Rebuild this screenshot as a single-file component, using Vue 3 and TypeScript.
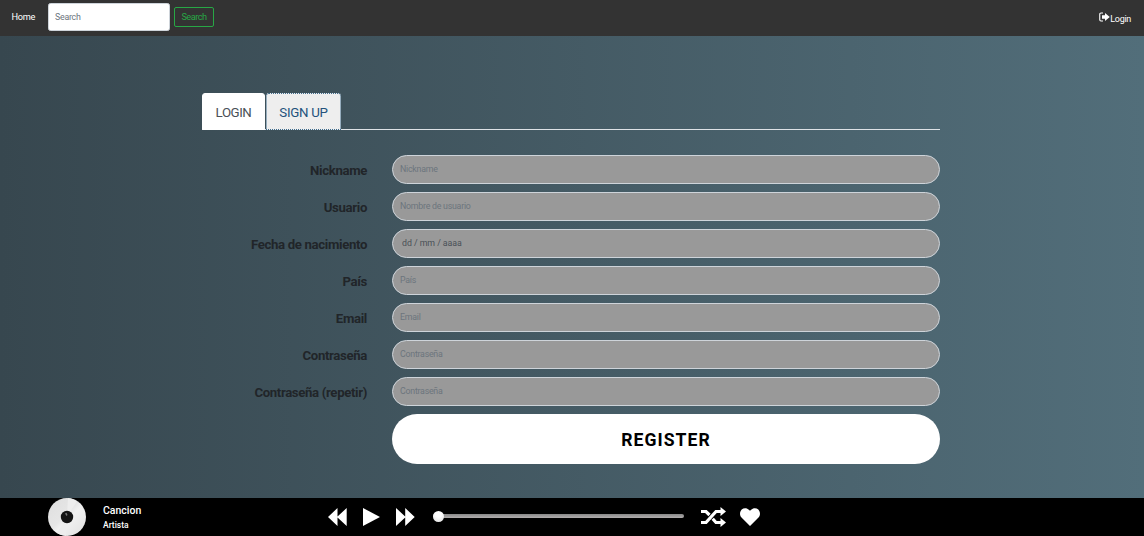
<script setup lang="ts">
interface Field {
  label: string
  hint: string
  date?: boolean
}

const fields: Field[] = [
  { label: 'Nickname', hint: 'Nickname' },
  { label: 'Usuario', hint: 'Nombre de usuario' },
  { label: 'Fecha de nacimiento', hint: 'dd / mm / aaaa', date: true },
  { label: 'País', hint: 'País' },
  { label: 'Email', hint: 'Email' },
  { label: 'Contraseña', hint: 'Contraseña' },
  { label: 'Contraseña (repetir)', hint: 'Contraseña' },
]
</script>

<template>
  <div class="page">
    <header class="navbar">
      <a class="home">Home</a>
      <input class="search" type="text" placeholder="Search" />
      <button class="search-btn">Search</button>
      <a class="login-link">
        <svg width="11" height="10" viewBox="0 0 22 20">
          <path d="M8 2H4Q1.500 2 1.500 4.500V15.500Q1.500 18 4 18H8" fill="none" stroke="#fff" stroke-width="2.200" />
          <path d="M6 6.500H12V1.800L21.500 10L12 18.200V13.500H6Z" fill="#fff" />
        </svg>
        <span>Login</span>
      </a>
    </header>

    <main class="content">
      <nav class="tabs">
        <a class="tab active">LOGIN</a>
        <a class="tab focused">SIGN UP</a>
      </nav>
      <form class="form" @submit.prevent>
        <div v-for="(field, i) in fields" :key="i" class="row">
          <label class="label">{{ field.label }}</label>
          <input class="field" :class="{ date: field.date }" type="text" :placeholder="field.hint" />
        </div>
        <button class="register">REGISTER</button>
      </form>
    </main>

    <footer class="player">
      <svg class="disc" width="38" height="38" viewBox="0 0 38 38">
        <defs>
          <linearGradient id="disc-sheen" x1="0" y1="0" x2="1" y2="1">
            <stop offset="0" stop-color="#dedede" />
            <stop offset="0.450" stop-color="#e6e6e6" />
            <stop offset="0.550" stop-color="#f1f1f1" />
            <stop offset="1" stop-color="#e0e0e0" />
          </linearGradient>
        </defs>
        <circle cx="19" cy="19" r="19" fill="url(#disc-sheen)" />
        <path d="M19 19L20 0A19 19 0 0 1 29 3ZM19 19L18 38A19 19 0 0 1 9 35Z" fill="#ededed" />
        <circle cx="19" cy="19" r="6.200" fill="#141414" />
        <path d="M17 15.500L18.500 14.800L19.500 17L18.500 18Z" fill="#777" />
      </svg>
      <div class="track">
        <div class="title">Cancion</div>
        <div class="artist">Artista</div>
      </div>
      <div class="controls">
        <svg width="19" height="18" viewBox="0 0 19 18"><path d="M0 9L9.500 0V8.500L18.700 0V18L9.500 9.500V18Z" fill="#fff" /></svg>
        <svg class="play" width="17" height="18" viewBox="0 0 17 18"><path d="M0 0L17 9L0 18Z" fill="#fff" /></svg>
        <svg class="next" width="19" height="18" viewBox="0 0 19 18"><path d="M18.700 9L9.200 0V8.500L0 0V18L9.200 9.500V18Z" fill="#fff" /></svg>
      </div>
      <div class="slider"><span class="thumb"></span></div>
      <svg class="shuffle" width="25" height="22" viewBox="0 0 25 22">
        <g fill="none" stroke="#fff" stroke-width="3.200">
          <path d="M0 5.500H5L8.500 9" />
          <path d="M0 16.500H5L15 5.500H20" />
          <path d="M11.700 12.800L15 16.500H20" />
        </g>
        <path d="M19.500 1L25 5.500L19.500 10ZM19.500 12L25 16.500L19.500 21Z" fill="#fff" />
      </svg>
      <svg class="heart" width="20" height="18" viewBox="0 0 20 18">
        <path d="M10 18L1.500 9.500C-0.700 7.200-0.300 3.500 1.700 1.500C4-0.500 7.500-0.300 10 2.800C12.500-0.300 16-0.500 18.300 1.500C20.300 3.500 20.700 7.200 18.500 9.500Z" fill="#fff" />
      </svg>
    </footer>
  </div>
</template>

<style>
body {
  margin: 0;
  overflow: hidden;
}
</style>

<style scoped>
.page {
  display: flex;
  flex-direction: column;
  width: 1144px;
  height: 536px;
  font-family: Roboto, sans-serif;
  background: linear-gradient(to right, #37474f, #526e7a);
}
.page * {
  box-sizing: border-box;
}
.navbar {
  display: flex;
  align-items: flex-start;
  flex: none;
  height: 36px;
  padding: 0 13px 0 11.500px;
  background: #333;
  color: #fff;
  font-size: 9px;
}
.home {
  width: 36.500px;
  font-size: 9.200px;
  line-height: 34px;
  letter-spacing: -0.300px;
}
.search {
  width: 122px;
  height: 28px;
  margin-top: 3px;
  padding: 0 6px;
  border: 1px solid #ced4da;
  border-radius: 2.500px;
  background: #fff;
  font: 8.800px Roboto, sans-serif;
  letter-spacing: -0.250px;
}
.search::placeholder {
  color: #6c757d;
  opacity: 1;
}
.search-btn {
  width: 40px;
  height: 20px;
  margin: 7px 0 0 4px;
  padding: 0;
  border: 1px solid #28a745;
  border-radius: 2px;
  background: transparent;
  color: #28a745;
  font: 9.200px/18px Roboto, sans-serif;
  letter-spacing: -0.500px;
}
.login-link {
  display: flex;
  align-items: center;
  height: 34px;
  margin-left: auto;
}
.login-link span {
  padding-top: 3px;
  letter-spacing: -0.300px;
}
.content {
  flex: 1;
  width: 738px;
  padding-top: 57px;
  margin-left: 202px;
}
.tabs {
  display: flex;
  gap: 1px;
  height: 37px;
  border-bottom: 1px solid #dee2e6;
}
.tab {
  height: 37px;
  border: 1px solid #fff;
  border-radius: 3px 3px 0 0;
  font-size: 13.300px;
  line-height: 37px;
  letter-spacing: -0.450px;
  text-align: center;
}
.active {
  width: 63px;
  background: #fff;
  color: #495057;
}
.focused {
  width: 75px;
  border: 1px dotted #3f6c8d;
  background: #eee;
  color: #23527c;
  letter-spacing: -0.300px;
}
.form {
  padding-top: 25px;
}
.row {
  display: flex;
  height: 29px;
  margin-bottom: 8px;
}
.label {
  width: 165px;
  margin-right: 25px;
  color: #212529;
  font-size: 13.200px;
  font-weight: 700;
  line-height: 32px;
  letter-spacing: -0.350px;
  text-align: right;
  white-space: nowrap;
}
.field {
  width: 548px;
  height: 29px;
  padding: 0 7px 1px;
  border: 1px solid #ced4da;
  border-radius: 15px;
  background: #999;
  font: 8.800px Roboto, sans-serif;
  letter-spacing: -0.240px;
}
.field::placeholder {
  color: #6c757d;
  opacity: 1;
}
.date {
  padding-left: 9px;
  letter-spacing: -0.050px;
}
.date::placeholder {
  color: #495057;
}
.register {
  display: block;
  width: 548px;
  height: 50px;
  margin-left: 190px;
  padding: 1px 0 0;
  border: 0;
  border-radius: 25px;
  background: #fff;
  color: #000;
  font: 700 17.600px Roboto, sans-serif;
  letter-spacing: 1.050px;
}
.player {
  display: flex;
  align-items: center;
  flex: none;
  height: 38px;
  padding-left: 48px;
  background: #000;
  color: #fff;
}
.track {
  width: 225px;
  padding-left: 17px;
}
.title {
  font-size: 10.500px;
  font-weight: 500;
  line-height: 15px;
}
.artist {
  font-size: 8.500px;
  font-weight: 500;
  line-height: 14px;
}
.controls {
  display: flex;
  width: 122px;
  padding-left: 17px;
}
.play {
  margin-left: 16px;
}
.next {
  margin-left: 16px;
}
.slider {
  display: flex;
  align-items: center;
  width: 251px;
  height: 4px;
  margin-bottom: 2px;
  border-radius: 2px;
  background: linear-gradient(#888, #b0adad);
}
.thumb {
  width: 11px;
  height: 11px;
  border-radius: 50%;
  background: radial-gradient(circle at 50% 30%, #fff 30%, #ddd);
}
.shuffle {
  margin-left: 17px;
}
.heart {
  margin-left: 14px;
}
</style>
